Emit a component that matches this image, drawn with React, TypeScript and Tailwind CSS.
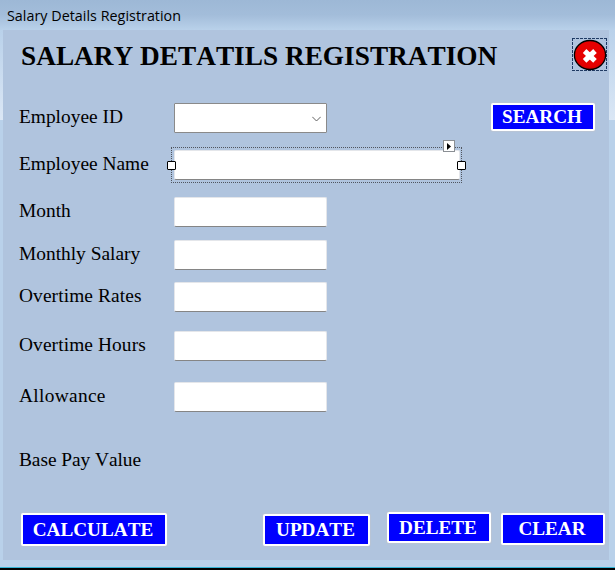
import React from "react";

const labelClass = "-mt-px w-[155px] shrink-0 whitespace-nowrap text-[19.4px] leading-[30px] text-black";

function TextBox() {
  return (
    <div className="h-[30px] w-[153px] rounded-[2px] border border-[#e4e6ea] border-b-[#858585] bg-white" />
  );
}

function ComboBox() {
  return (
    <div className="flex h-[30px] w-[153px] items-center justify-end rounded-[1px] border border-[#8a8a8a] bg-white pr-[5px] pt-px">
      <svg width="9" height="6" viewBox="0 0 9 6" fill="none" stroke="#606060">
        <path d="M0.3 0.8 L4.5 5 L8.7 0.8" />
      </svg>
    </div>
  );
}

function SelectedTextBox() {
  return (
    <div className="relative h-[30px] w-[286px] rounded-[2px] border border-[#e4e6ea] border-b-[#858585] bg-white">
      <div className="absolute -left-[4px] -top-[4px] h-[36px] w-[291px] border border-dotted border-[#505660]" />
      <div className="absolute -left-[8px] top-[10px] h-[9px] w-[9px] rounded-[1px] border border-black bg-white" />
      <div className="absolute left-[282px] top-[10px] h-[9px] w-[9px] rounded-[1px] border border-black bg-white" />
      <div className="absolute left-[268px] -top-[11px] flex h-[12px] w-[12px] items-center justify-center border border-[#8b8f94] bg-white">
        <svg width="4" height="7" viewBox="0 0 4 7">
          <path d="M0 0 L4 3.5 L0 7 Z" fill="#000" />
        </svg>
      </div>
    </div>
  );
}

function Row({ label, className, children }: { label: string; className: string; children?: React.ReactNode }) {
  return (
    <div className={`flex h-[30px] pl-[16px] ${className}`}>
      <div className={labelClass}>{label}</div>
      {children}
    </div>
  );
}

function Button({ label, className }: { label: string; className: string }) {
  return (
    <button
      className={`flex shrink-0 items-center justify-center whitespace-nowrap rounded-[2px] bg-white p-[2px] text-[19.2px] font-bold leading-none text-white shadow-[0_0_0_1px_#c0c4cc80] ${className}`}
    >
      <span className="flex h-full w-full items-center justify-center bg-[#0000ff] pr-[2px]">{label}</span>
    </button>
  );
}

function CloseButton() {
  return (
    <svg width="35" height="34" viewBox="0 0 35 34">
      <defs>
        <radialGradient id="closeFill" cx="0.5" cy="0.45" r="0.55">
          <stop offset="0" stopColor="#e60000" />
          <stop offset="0.8" stopColor="#e60000" />
          <stop offset="1" stopColor="#c80000" />
        </radialGradient>
      </defs>
      <path
        d="M0 0.5 H35 M0 32.5 H35 M0.5 0 V33 M34.5 0 V33"
        fill="none"
        stroke="#1f3a63"
        strokeDasharray="3 1"
      />
      <ellipse cx="18" cy="17" rx="15.6" ry="14.5" fill="url(#closeFill)" stroke="#000" strokeWidth="1.3" />
      <path d="M12.6 13 L23 22.8 M23 13 L12.6 22.8" stroke="#fff" strokeWidth="5.2" />
    </svg>
  );
}

export default function App() {
  return (
    <div className="flex h-[570px] w-[615px] flex-col overflow-hidden bg-[#b9d1ea] font-['Liberation_Serif','Times_New_Roman',serif] [font-kerning:none]">
      <header className="h-[30px] shrink-0 bg-linear-to-b from-[#9db8d6] via-[#a3bdda] to-[#b9d1ea] pl-[7px] font-['Open_Sans','Noto_Sans',sans-serif] text-[14.3px] leading-[32px] text-black">
        <span className="inline-block whitespace-nowrap tracking-[0.03px]">Salary Details Registration</span>
      </header>
      <div className="flex h-[530px] shrink-0">
        <div className="h-[90px] w-[3px] bg-linear-to-b from-[#b9d1ea] to-[#dbe7f5]" />
        <main className="h-[530px] w-[606px] bg-[#b0c4de]">
          <div className="flex h-[73px] justify-between pl-[18px] pr-[2px] pt-[8px]">
            <h1 className="whitespace-nowrap text-[27.3px] font-bold leading-[36px] text-black">
              SALARY DETATILS REGISTRATION
            </h1>
            <CloseButton />
          </div>
          <Row label="Employee ID" className="">
            <ComboBox />
            <Button label="SEARCH" className="ml-[164px] h-[28px] w-[104px]" />
          </Row>
          <Row label="Employee Name" className="mt-[17px]">
            <SelectedTextBox />
          </Row>
          <Row label="Month" className="mt-[17px]"><TextBox /></Row>
          <Row label="Monthly Salary" className="mt-[13px]"><TextBox /></Row>
          <Row label="Overtime Rates" className="mt-[12px] tracking-[0.1px]"><TextBox /></Row>
          <Row label="Overtime Hours" className="mt-[19px] tracking-[0.1px]"><TextBox /></Row>
          <Row label="Allowance" className="mt-[21px] tracking-[0.3px]"><TextBox /></Row>
          <Row label="Base Pay Value" className="mt-[34px] tracking-[-0.06px]" />
          <div className="mt-[36px] flex items-start pl-[18px]">
            <Button label="CALCULATE" className="mt-[1px] h-[33px] w-[146px]" />
            <Button label="UPDATE" className="ml-[96px] mt-[2px] h-[32px] w-[107px]" />
            <Button label="DELETE" className="ml-[17px] h-[31px] w-[104px]" />
            <Button label="CLEAR" className="ml-[10px] mt-[1px] h-[32px] w-[104px]" />
          </div>
        </main>
        <div className="h-[90px] w-[6px] bg-linear-to-b from-[#b9d1ea] to-[#dbe7f5]" />
      </div>
      <div className="h-[7px] shrink-0" />
      <div className="h-[3px] shrink-0 border-t border-[#35b5d6] bg-black" />
    </div>
  );
}
